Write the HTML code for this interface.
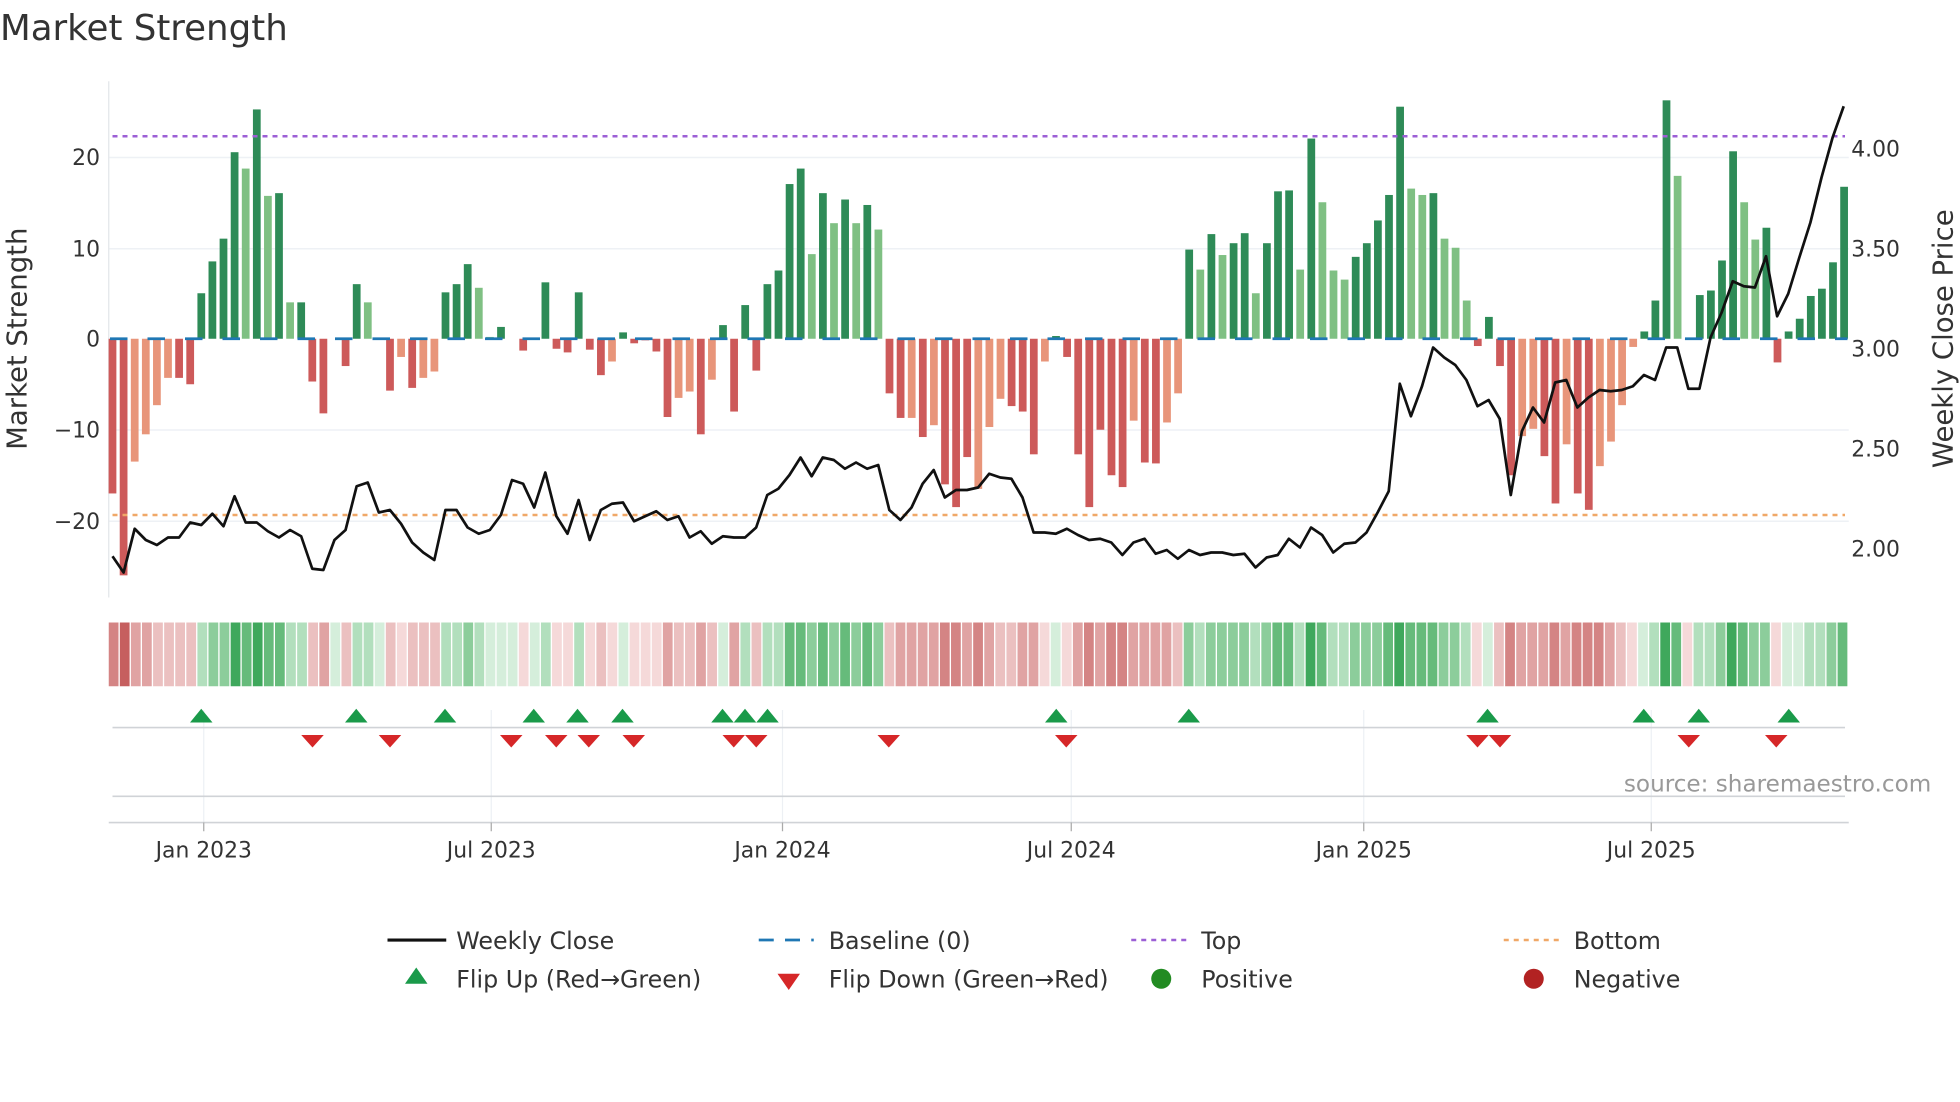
<!DOCTYPE html>
<html><head><meta charset="utf-8"><style>
html,body{margin:0;padding:0;background:#fff;}
svg{display:block;font-family:"DejaVu Sans","Liberation Sans",sans-serif;}
.R{fill:#cd5a5a}.O{fill:#e8957a}.G{fill:#2e8b57}.L{fill:#7fc083}.P{fill:#f0a0a0}
.g1{fill:#d5eedb}.g2{fill:#b2dfbd}.g3{fill:#8ccd9b}.g4{fill:#66bb7b}.g5{fill:#3fa85c}
.r1{fill:#f5d9d9}.r2{fill:#ebc0c0}.r3{fill:#e0a3a3}.r4{fill:#d48484}.r5{fill:#c65f5f}
</style></head><body>
<svg width="1960" height="1102" viewBox="0 0 1568 881.6" xmlns="http://www.w3.org/2000/svg">
<rect width="1568" height="882" fill="#fff"/>
<text x="0" y="32" font-size="28.5" fill="#333">Market Strength</text>
<g stroke="#eef1f5" stroke-width="1.2">
<line x1="87" x2="1479" y1="126" y2="126"/><line x1="87" x2="1479" y1="199" y2="199"/>
<line x1="87" x2="1479" y1="344" y2="344"/><line x1="87" x2="1479" y1="417" y2="417"/>
</g>
<line x1="87" x2="87" y1="65" y2="478" stroke="#e3e6ea" stroke-width="1"/>
<g font-size="17.5" fill="#333" text-anchor="end">
<text x="80" y="132">20</text><text x="80" y="205">10</text><text x="80" y="277">0</text>
<text x="80" y="350">−10</text><text x="80" y="423">−20</text>
</g>
<g font-size="17.5" fill="#333">
<text x="1481" y="125">4.00</text><text x="1481" y="205">3.50</text><text x="1481" y="285">3.00</text>
<text x="1481" y="365">2.50</text><text x="1481" y="445">2.00</text>
</g>
<text transform="translate(21,271) rotate(-90)" font-size="22" fill="#333" text-anchor="middle">Market Strength</text>
<text transform="translate(1562,271) rotate(-90)" font-size="22" fill="#333" text-anchor="middle">Weekly Close Price</text>
<g transform="translate(86.9,271) scale(8.88,-7.28)">
<rect x="0" y="-17" width="0.698" height="17" class="R"/>
<rect x="1" y="-26" width="0.698" height="26" class="R"/>
<rect x="2" y="-13.5" width="0.698" height="13.5" class="O"/>
<rect x="3" y="-10.5" width="0.698" height="10.5" class="O"/>
<rect x="4" y="-7.3" width="0.698" height="7.3" class="O"/>
<rect x="5" y="-4.3" width="0.698" height="4.3" class="O"/>
<rect x="6" y="-4.3" width="0.698" height="4.3" class="R"/>
<rect x="7" y="-5" width="0.698" height="5" class="R"/>
<rect x="8" y="0" width="0.698" height="5" class="G"/>
<rect x="9" y="0" width="0.698" height="8.5" class="G"/>
<rect x="10" y="0" width="0.698" height="11" class="G"/>
<rect x="11" y="0" width="0.698" height="20.5" class="G"/>
<rect x="12" y="0" width="0.698" height="18.7" class="L"/>
<rect x="13" y="0" width="0.698" height="25.2" class="G"/>
<rect x="14" y="0" width="0.698" height="15.7" class="L"/>
<rect x="15" y="0" width="0.698" height="16" class="G"/>
<rect x="16" y="0" width="0.698" height="4" class="L"/>
<rect x="17" y="0" width="0.698" height="4" class="G"/>
<rect x="18" y="-4.7" width="0.698" height="4.7" class="R"/>
<rect x="19" y="-8.2" width="0.698" height="8.2" class="R"/>
<rect x="21" y="-3" width="0.698" height="3" class="R"/>
<rect x="22" y="0" width="0.698" height="6" class="G"/>
<rect x="23" y="0" width="0.698" height="4" class="L"/>
<rect x="25" y="-5.7" width="0.698" height="5.7" class="R"/>
<rect x="26" y="-2" width="0.698" height="2" class="O"/>
<rect x="27" y="-5.4" width="0.698" height="5.4" class="R"/>
<rect x="28" y="-4.3" width="0.698" height="4.3" class="O"/>
<rect x="29" y="-3.6" width="0.698" height="3.6" class="O"/>
<rect x="30" y="0" width="0.698" height="5.1" class="G"/>
<rect x="31" y="0" width="0.698" height="6" class="G"/>
<rect x="32" y="0" width="0.698" height="8.2" class="G"/>
<rect x="33" y="0" width="0.698" height="5.6" class="L"/>
<rect x="34" y="0" width="0.698" height="0.2" class="L"/>
<rect x="35" y="0" width="0.698" height="1.3" class="G"/>
<rect x="37" y="-1.3" width="0.698" height="1.3" class="R"/>
<rect x="39" y="0" width="0.698" height="6.2" class="G"/>
<rect x="40" y="-1.1" width="0.698" height="1.1" class="R"/>
<rect x="41" y="-1.5" width="0.698" height="1.5" class="R"/>
<rect x="42" y="0" width="0.698" height="5.1" class="G"/>
<rect x="43" y="-1.2" width="0.698" height="1.2" class="R"/>
<rect x="44" y="-4" width="0.698" height="4" class="R"/>
<rect x="45" y="-2.5" width="0.698" height="2.5" class="O"/>
<rect x="46" y="0" width="0.698" height="0.7" class="G"/>
<rect x="47" y="-0.5" width="0.698" height="0.5" class="R"/>
<rect x="48" y="-0.2" width="0.698" height="0.2" class="P"/>
<rect x="49" y="-1.4" width="0.698" height="1.4" class="R"/>
<rect x="50" y="-8.6" width="0.698" height="8.6" class="R"/>
<rect x="51" y="-6.5" width="0.698" height="6.5" class="O"/>
<rect x="52" y="-5.8" width="0.698" height="5.8" class="O"/>
<rect x="53" y="-10.5" width="0.698" height="10.5" class="R"/>
<rect x="54" y="-4.5" width="0.698" height="4.5" class="O"/>
<rect x="55" y="0" width="0.698" height="1.5" class="G"/>
<rect x="56" y="-8" width="0.698" height="8" class="R"/>
<rect x="57" y="0" width="0.698" height="3.7" class="G"/>
<rect x="58" y="-3.5" width="0.698" height="3.5" class="R"/>
<rect x="59" y="0" width="0.698" height="6" class="G"/>
<rect x="60" y="0" width="0.698" height="7.5" class="G"/>
<rect x="61" y="0" width="0.698" height="17" class="G"/>
<rect x="62" y="0" width="0.698" height="18.7" class="G"/>
<rect x="63" y="0" width="0.698" height="9.3" class="L"/>
<rect x="64" y="0" width="0.698" height="16" class="G"/>
<rect x="65" y="0" width="0.698" height="12.7" class="L"/>
<rect x="66" y="0" width="0.698" height="15.3" class="G"/>
<rect x="67" y="0" width="0.698" height="12.7" class="L"/>
<rect x="68" y="0" width="0.698" height="14.7" class="G"/>
<rect x="69" y="0" width="0.698" height="12" class="L"/>
<rect x="70" y="-6" width="0.698" height="6" class="R"/>
<rect x="71" y="-8.7" width="0.698" height="8.7" class="R"/>
<rect x="72" y="-8.7" width="0.698" height="8.7" class="O"/>
<rect x="73" y="-10.8" width="0.698" height="10.8" class="R"/>
<rect x="74" y="-9.5" width="0.698" height="9.5" class="O"/>
<rect x="75" y="-16" width="0.698" height="16" class="R"/>
<rect x="76" y="-18.5" width="0.698" height="18.5" class="R"/>
<rect x="77" y="-13" width="0.698" height="13" class="R"/>
<rect x="78" y="-16.5" width="0.698" height="16.5" class="O"/>
<rect x="79" y="-9.7" width="0.698" height="9.7" class="O"/>
<rect x="80" y="-6.6" width="0.698" height="6.6" class="O"/>
<rect x="81" y="-7.4" width="0.698" height="7.4" class="R"/>
<rect x="82" y="-8" width="0.698" height="8" class="R"/>
<rect x="83" y="-12.7" width="0.698" height="12.7" class="R"/>
<rect x="84" y="-2.5" width="0.698" height="2.5" class="O"/>
<rect x="85" y="0" width="0.698" height="0.3" class="G"/>
<rect x="86" y="-2" width="0.698" height="2" class="R"/>
<rect x="87" y="-12.7" width="0.698" height="12.7" class="R"/>
<rect x="88" y="-18.5" width="0.698" height="18.5" class="R"/>
<rect x="89" y="-10" width="0.698" height="10" class="R"/>
<rect x="90" y="-15" width="0.698" height="15" class="R"/>
<rect x="91" y="-16.3" width="0.698" height="16.3" class="R"/>
<rect x="92" y="-9" width="0.698" height="9" class="O"/>
<rect x="93" y="-13.6" width="0.698" height="13.6" class="R"/>
<rect x="94" y="-13.7" width="0.698" height="13.7" class="R"/>
<rect x="95" y="-9.2" width="0.698" height="9.2" class="O"/>
<rect x="96" y="-6" width="0.698" height="6" class="O"/>
<rect x="97" y="0" width="0.698" height="9.8" class="G"/>
<rect x="98" y="0" width="0.698" height="7.6" class="L"/>
<rect x="99" y="0" width="0.698" height="11.5" class="G"/>
<rect x="100" y="0" width="0.698" height="9.2" class="L"/>
<rect x="101" y="0" width="0.698" height="10.5" class="G"/>
<rect x="102" y="0" width="0.698" height="11.6" class="G"/>
<rect x="103" y="0" width="0.698" height="5" class="L"/>
<rect x="104" y="0" width="0.698" height="10.5" class="G"/>
<rect x="105" y="0" width="0.698" height="16.2" class="G"/>
<rect x="106" y="0" width="0.698" height="16.3" class="G"/>
<rect x="107" y="0" width="0.698" height="7.6" class="L"/>
<rect x="108" y="0" width="0.698" height="22" class="G"/>
<rect x="109" y="0" width="0.698" height="15" class="L"/>
<rect x="110" y="0" width="0.698" height="7.5" class="L"/>
<rect x="111" y="0" width="0.698" height="6.5" class="L"/>
<rect x="112" y="0" width="0.698" height="9" class="G"/>
<rect x="113" y="0" width="0.698" height="10.5" class="G"/>
<rect x="114" y="0" width="0.698" height="13" class="G"/>
<rect x="115" y="0" width="0.698" height="15.8" class="G"/>
<rect x="116" y="0" width="0.698" height="25.5" class="G"/>
<rect x="117" y="0" width="0.698" height="16.5" class="L"/>
<rect x="118" y="0" width="0.698" height="15.8" class="L"/>
<rect x="119" y="0" width="0.698" height="16" class="G"/>
<rect x="120" y="0" width="0.698" height="11" class="L"/>
<rect x="121" y="0" width="0.698" height="10" class="L"/>
<rect x="122" y="0" width="0.698" height="4.2" class="L"/>
<rect x="123" y="-0.8" width="0.698" height="0.8" class="R"/>
<rect x="124" y="0" width="0.698" height="2.4" class="G"/>
<rect x="125" y="-3" width="0.698" height="3" class="R"/>
<rect x="126" y="-15" width="0.698" height="15" class="R"/>
<rect x="127" y="-10.7" width="0.698" height="10.7" class="O"/>
<rect x="128" y="-9.9" width="0.698" height="9.9" class="O"/>
<rect x="129" y="-12.9" width="0.698" height="12.9" class="R"/>
<rect x="130" y="-18.1" width="0.698" height="18.1" class="R"/>
<rect x="131" y="-11.6" width="0.698" height="11.6" class="O"/>
<rect x="132" y="-17" width="0.698" height="17" class="R"/>
<rect x="133" y="-18.8" width="0.698" height="18.8" class="R"/>
<rect x="134" y="-14" width="0.698" height="14" class="O"/>
<rect x="135" y="-11.3" width="0.698" height="11.3" class="O"/>
<rect x="136" y="-7.3" width="0.698" height="7.3" class="O"/>
<rect x="137" y="-0.9" width="0.698" height="0.9" class="O"/>
<rect x="138" y="0" width="0.698" height="0.8" class="G"/>
<rect x="139" y="0" width="0.698" height="4.2" class="G"/>
<rect x="140" y="0" width="0.698" height="26.2" class="G"/>
<rect x="141" y="0" width="0.698" height="17.9" class="L"/>
<rect x="142" y="-0.1" width="0.698" height="0.1" class="P"/>
<rect x="143" y="0" width="0.698" height="4.8" class="G"/>
<rect x="144" y="0" width="0.698" height="5.3" class="G"/>
<rect x="145" y="0" width="0.698" height="8.6" class="G"/>
<rect x="146" y="0" width="0.698" height="20.6" class="G"/>
<rect x="147" y="0" width="0.698" height="15" class="L"/>
<rect x="148" y="0" width="0.698" height="10.9" class="L"/>
<rect x="149" y="0" width="0.698" height="12.2" class="G"/>
<rect x="150" y="-2.6" width="0.698" height="2.6" class="R"/>
<rect x="151" y="0" width="0.698" height="0.8" class="G"/>
<rect x="152" y="0" width="0.698" height="2.2" class="G"/>
<rect x="153" y="0" width="0.698" height="4.7" class="G"/>
<rect x="154" y="0" width="0.698" height="5.5" class="G"/>
<rect x="155" y="0" width="0.698" height="8.4" class="G"/>
<rect x="156" y="0" width="0.698" height="16.7" class="G"/>
</g>
<line x1="88" x2="1478" y1="271" y2="271" stroke="#1f77b4" stroke-width="2.2" stroke-dasharray="14 16"/>
<line x1="90" x2="1476" y1="109" y2="109" stroke="#9c5fd6" stroke-width="2" stroke-dasharray="4 4"/>
<line x1="90" x2="1476" y1="412" y2="412" stroke="#f0a868" stroke-width="2" stroke-dasharray="4 4"/>
<g transform="translate(90,0) scale(8.878,1)">
<polyline fill="none" stroke="#111" stroke-width="2.7" stroke-linejoin="round" vector-effect="non-scaling-stroke" points="0,445 1,458 2,423 3,432 4,436 5,430 6,430 7,418 8,420 9,411 10,421 11,397 12,418 13,418 14,425 15,430 16,424 17,429 18,455 19,456 20,432 21,424 22,389 23,386 24,410 25,408 26,419 27,434 28,442 29,448 30,408 31,408 32,422 33,427 34,424 35,412 36,384 37,387 38,406 39,378 40,413 41,427 42,400 43,432 44,408 45,403 46,402 47,417 48,413 49,409 50,416 51,413 52,430 53,425 54,435 55,429 56,430 57,430 58,422 59,396 60,391 61,380 62,366 63,381 64,366 65,368 66,375 67,370 68,375 69,372 70,408 71,416 72,406 73,387 74,376 75,398 76,392 77,392 78,390 79,379 80,382 81,383 82,398 83,426 84,426 85,427 86,423 87,428 88,432 89,431 90,434 91,444 92,434 93,431 94,443 95,440 96,447 97,440 98,444 99,442 100,442 101,444 102,443 103,454 104,446 105,444 106,431 107,438 108,422 109,428 110,442 111,435 112,434 113,426 114,410 115,393 116,307 117,333 118,309 119,278 120,286 121,292 122,304 123,325 124,320 125,335 126,396 127,345 128,326 129,338 130,306 131,304 132,326 133,318 134,312 135,313 136,312 137,309 138,300 139,304 140,278 141,278 142,311 143,311 144,270 145,250 146,225 147,229 148,230 149,205 150,253 151,235 152,206 153,178 154,142 155,110 156,85"/>
</g>
<g transform="translate(87,498) scale(8.866,1)">
<rect x="0" width="0.88" height="51" class="r4"/><rect x="1" width="0.88" height="51" class="r5"/><rect x="2" width="0.88" height="51" class="r3"/><rect x="3" width="0.88" height="51" class="r3"/><rect x="4" width="0.88" height="51" class="r2"/><rect x="5" width="0.88" height="51" class="r2"/><rect x="6" width="0.88" height="51" class="r2"/><rect x="7" width="0.88" height="51" class="r2"/><rect x="8" width="0.88" height="51" class="g2"/><rect x="9" width="0.88" height="51" class="g3"/>
<rect x="10" width="0.88" height="51" class="g3"/><rect x="11" width="0.88" height="51" class="g5"/><rect x="12" width="0.88" height="51" class="g4"/><rect x="13" width="0.88" height="51" class="g5"/><rect x="14" width="0.88" height="51" class="g4"/><rect x="15" width="0.88" height="51" class="g4"/><rect x="16" width="0.88" height="51" class="g2"/><rect x="17" width="0.88" height="51" class="g2"/><rect x="18" width="0.88" height="51" class="r2"/><rect x="19" width="0.88" height="51" class="r3"/>
<rect x="20" width="0.88" height="51" class="g1"/><rect x="21" width="0.88" height="51" class="r2"/><rect x="22" width="0.88" height="51" class="g2"/><rect x="23" width="0.88" height="51" class="g2"/><rect x="24" width="0.88" height="51" class="g1"/><rect x="25" width="0.88" height="51" class="r2"/><rect x="26" width="0.88" height="51" class="r1"/><rect x="27" width="0.88" height="51" class="r2"/><rect x="28" width="0.88" height="51" class="r2"/><rect x="29" width="0.88" height="51" class="r2"/>
<rect x="30" width="0.88" height="51" class="g2"/><rect x="31" width="0.88" height="51" class="g2"/><rect x="32" width="0.88" height="51" class="g3"/><rect x="33" width="0.88" height="51" class="g2"/><rect x="34" width="0.88" height="51" class="g1"/><rect x="35" width="0.88" height="51" class="g1"/><rect x="36" width="0.88" height="51" class="g1"/><rect x="37" width="0.88" height="51" class="r1"/><rect x="38" width="0.88" height="51" class="g1"/><rect x="39" width="0.88" height="51" class="g2"/>
<rect x="40" width="0.88" height="51" class="r1"/><rect x="41" width="0.88" height="51" class="r1"/><rect x="42" width="0.88" height="51" class="g2"/><rect x="43" width="0.88" height="51" class="r1"/><rect x="44" width="0.88" height="51" class="r2"/><rect x="45" width="0.88" height="51" class="r1"/><rect x="46" width="0.88" height="51" class="g1"/><rect x="47" width="0.88" height="51" class="r1"/><rect x="48" width="0.88" height="51" class="r1"/><rect x="49" width="0.88" height="51" class="r1"/>
<rect x="50" width="0.88" height="51" class="r3"/><rect x="51" width="0.88" height="51" class="r2"/><rect x="52" width="0.88" height="51" class="r2"/><rect x="53" width="0.88" height="51" class="r3"/><rect x="54" width="0.88" height="51" class="r2"/><rect x="55" width="0.88" height="51" class="g1"/><rect x="56" width="0.88" height="51" class="r3"/><rect x="57" width="0.88" height="51" class="g2"/><rect x="58" width="0.88" height="51" class="r2"/><rect x="59" width="0.88" height="51" class="g2"/>
<rect x="60" width="0.88" height="51" class="g2"/><rect x="61" width="0.88" height="51" class="g4"/><rect x="62" width="0.88" height="51" class="g4"/><rect x="63" width="0.88" height="51" class="g3"/><rect x="64" width="0.88" height="51" class="g4"/><rect x="65" width="0.88" height="51" class="g3"/><rect x="66" width="0.88" height="51" class="g4"/><rect x="67" width="0.88" height="51" class="g3"/><rect x="68" width="0.88" height="51" class="g4"/><rect x="69" width="0.88" height="51" class="g3"/>
<rect x="70" width="0.88" height="51" class="r2"/><rect x="71" width="0.88" height="51" class="r3"/><rect x="72" width="0.88" height="51" class="r3"/><rect x="73" width="0.88" height="51" class="r3"/><rect x="74" width="0.88" height="51" class="r3"/><rect x="75" width="0.88" height="51" class="r4"/><rect x="76" width="0.88" height="51" class="r4"/><rect x="77" width="0.88" height="51" class="r3"/><rect x="78" width="0.88" height="51" class="r4"/><rect x="79" width="0.88" height="51" class="r3"/>
<rect x="80" width="0.88" height="51" class="r2"/><rect x="81" width="0.88" height="51" class="r2"/><rect x="82" width="0.88" height="51" class="r3"/><rect x="83" width="0.88" height="51" class="r3"/><rect x="84" width="0.88" height="51" class="r1"/><rect x="85" width="0.88" height="51" class="g1"/><rect x="86" width="0.88" height="51" class="r1"/><rect x="87" width="0.88" height="51" class="r3"/><rect x="88" width="0.88" height="51" class="r4"/><rect x="89" width="0.88" height="51" class="r3"/>
<rect x="90" width="0.88" height="51" class="r4"/><rect x="91" width="0.88" height="51" class="r4"/><rect x="92" width="0.88" height="51" class="r3"/><rect x="93" width="0.88" height="51" class="r3"/><rect x="94" width="0.88" height="51" class="r3"/><rect x="95" width="0.88" height="51" class="r3"/><rect x="96" width="0.88" height="51" class="r2"/><rect x="97" width="0.88" height="51" class="g3"/><rect x="98" width="0.88" height="51" class="g2"/><rect x="99" width="0.88" height="51" class="g3"/>
<rect x="100" width="0.88" height="51" class="g3"/><rect x="101" width="0.88" height="51" class="g3"/><rect x="102" width="0.88" height="51" class="g3"/><rect x="103" width="0.88" height="51" class="g2"/><rect x="104" width="0.88" height="51" class="g3"/><rect x="105" width="0.88" height="51" class="g4"/><rect x="106" width="0.88" height="51" class="g4"/><rect x="107" width="0.88" height="51" class="g2"/><rect x="108" width="0.88" height="51" class="g5"/><rect x="109" width="0.88" height="51" class="g4"/>
<rect x="110" width="0.88" height="51" class="g2"/><rect x="111" width="0.88" height="51" class="g2"/><rect x="112" width="0.88" height="51" class="g3"/><rect x="113" width="0.88" height="51" class="g3"/><rect x="114" width="0.88" height="51" class="g3"/><rect x="115" width="0.88" height="51" class="g4"/><rect x="116" width="0.88" height="51" class="g5"/><rect x="117" width="0.88" height="51" class="g4"/><rect x="118" width="0.88" height="51" class="g4"/><rect x="119" width="0.88" height="51" class="g4"/>
<rect x="120" width="0.88" height="51" class="g3"/><rect x="121" width="0.88" height="51" class="g3"/><rect x="122" width="0.88" height="51" class="g2"/><rect x="123" width="0.88" height="51" class="r1"/><rect x="124" width="0.88" height="51" class="g1"/><rect x="125" width="0.88" height="51" class="r2"/><rect x="126" width="0.88" height="51" class="r4"/><rect x="127" width="0.88" height="51" class="r3"/><rect x="128" width="0.88" height="51" class="r3"/><rect x="129" width="0.88" height="51" class="r3"/>
<rect x="130" width="0.88" height="51" class="r4"/><rect x="131" width="0.88" height="51" class="r3"/><rect x="132" width="0.88" height="51" class="r4"/><rect x="133" width="0.88" height="51" class="r4"/><rect x="134" width="0.88" height="51" class="r4"/><rect x="135" width="0.88" height="51" class="r3"/><rect x="136" width="0.88" height="51" class="r2"/><rect x="137" width="0.88" height="51" class="r1"/><rect x="138" width="0.88" height="51" class="g1"/><rect x="139" width="0.88" height="51" class="g2"/>
<rect x="140" width="0.88" height="51" class="g5"/><rect x="141" width="0.88" height="51" class="g4"/><rect x="142" width="0.88" height="51" class="r1"/><rect x="143" width="0.88" height="51" class="g2"/><rect x="144" width="0.88" height="51" class="g2"/><rect x="145" width="0.88" height="51" class="g3"/><rect x="146" width="0.88" height="51" class="g5"/><rect x="147" width="0.88" height="51" class="g4"/><rect x="148" width="0.88" height="51" class="g3"/><rect x="149" width="0.88" height="51" class="g3"/>
<rect x="150" width="0.88" height="51" class="r1"/><rect x="151" width="0.88" height="51" class="g1"/><rect x="152" width="0.88" height="51" class="g1"/><rect x="153" width="0.88" height="51" class="g2"/><rect x="154" width="0.88" height="51" class="g2"/><rect x="155" width="0.88" height="51" class="g3"/><rect x="156" width="0.88" height="51" class="g4"/>
</g>
<g stroke="#edf0f4" stroke-width="1">
<line x1="163" x2="163" y1="568" y2="658"/><line x1="393" x2="393" y1="568" y2="658"/>
<line x1="626" x2="626" y1="568" y2="658"/><line x1="857" x2="857" y1="568" y2="658"/>
<line x1="1091" x2="1091" y1="568" y2="658"/><line x1="1321" x2="1321" y1="568" y2="658"/>
</g>
<line x1="90" x2="1476" y1="582" y2="582" stroke="#d0d3d7" stroke-width="1.3"/>
<line x1="90" x2="1476" y1="637" y2="637" stroke="#d0d3d7" stroke-width="1.3"/>
<line x1="87" x2="1479" y1="658" y2="658" stroke="#d0d3d7" stroke-width="1.3"/>
<g stroke="#aaa" stroke-width="1">
<line x1="163" x2="163" y1="658" y2="665"/><line x1="393" x2="393" y1="658" y2="665"/>
<line x1="626" x2="626" y1="658" y2="665"/><line x1="857" x2="857" y1="658" y2="665"/>
<line x1="1091" x2="1091" y1="658" y2="665"/><line x1="1321" x2="1321" y1="658" y2="665"/>
</g>
<g fill="#1a9a4a">
<polygon points="161,567 170,578 152,578"/><polygon points="285,567 294,578 276,578"/><polygon points="356,567 365,578 347,578"/>
<polygon points="427,567 436,578 418,578"/><polygon points="462,567 471,578 453,578"/><polygon points="498,567 507,578 489,578"/>
<polygon points="578,567 587,578 569,578"/><polygon points="596,567 605,578 587,578"/><polygon points="614,567 623,578 605,578"/>
<polygon points="845,567 854,578 836,578"/><polygon points="951,567 960,578 942,578"/><polygon points="1190,567 1199,578 1181,578"/>
<polygon points="1315,567 1324,578 1306,578"/><polygon points="1359,567 1368,578 1350,578"/><polygon points="1431,567 1440,578 1422,578"/>
</g>
<g fill="#d62728">
<polygon points="241,588 259,588 250,598"/><polygon points="303,588 321,588 312,598"/><polygon points="400,588 418,588 409,598"/>
<polygon points="436,588 454,588 445,598"/><polygon points="462,588 480,588 471,598"/><polygon points="498,588 516,588 507,598"/>
<polygon points="578,588 596,588 587,598"/><polygon points="596,588 614,588 605,598"/><polygon points="702,588 720,588 711,598"/>
<polygon points="844,588 862,588 853,598"/><polygon points="1173,588 1191,588 1182,598"/><polygon points="1191,588 1209,588 1200,598"/>
<polygon points="1342,588 1360,588 1351,598"/><polygon points="1412,588 1430,588 1421,598"/>
</g>
<text x="1545" y="633" font-size="18.5" fill="#999" text-anchor="end">source: sharemaestro.com</text>
<g font-size="17.5" fill="#333" text-anchor="middle">
<text x="163" y="686">Jan 2023</text><text x="393" y="686">Jul 2023</text><text x="626" y="686">Jan 2024</text>
<text x="857" y="686">Jul 2024</text><text x="1091" y="686">Jan 2025</text><text x="1321" y="686">Jul 2025</text>
</g>
<g font-size="19" fill="#333">
<line x1="310" x2="357" y1="752" y2="752" stroke="#111" stroke-width="2.5"/>
<text x="365" y="759">Weekly Close</text>
<line x1="607" x2="651" y1="752" y2="752" stroke="#1f77b4" stroke-width="2.2" stroke-dasharray="12 9"/>
<text x="663" y="759">Baseline (0)</text>
<line x1="905" x2="949" y1="752" y2="752" stroke="#9c5fd6" stroke-width="2" stroke-dasharray="4 4"/>
<text x="961" y="759">Top</text>
<line x1="1203" x2="1247" y1="752" y2="752" stroke="#f0a868" stroke-width="2" stroke-dasharray="4 4"/>
<text x="1259" y="759">Bottom</text>
<polygon points="333,774 342,787 324,787" fill="#1a9a4a"/>
<text x="365" y="790">Flip Up (Red→Green)</text>
<polygon points="622,779 640,779 631,792" fill="#d62728"/>
<text x="663" y="790">Flip Down (Green→Red)</text>
<circle cx="929" cy="783" r="8" fill="#228b22"/>
<text x="961" y="790">Positive</text>
<circle cx="1227" cy="783" r="8" fill="#b22222"/>
<text x="1259" y="790">Negative</text>
</g>
</svg>
</body></html>
